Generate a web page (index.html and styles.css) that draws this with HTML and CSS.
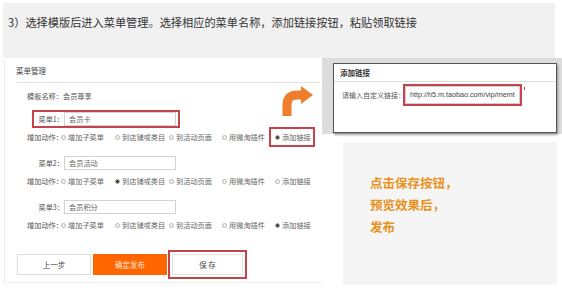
FILE: index.html
```html
<!DOCTYPE html>
<html lang="zh-CN">
<head>
<meta charset="utf-8">
<title>菜单管理</title>
<link rel="stylesheet" href="styles.css">
</head>
<body>
<div class="band">
  <p class="step">3）选择模版后进入菜单管理。选择相应的菜单名称，添加链接按钮，粘贴领取链接</p>
</div>
<div class="main">
  <section class="panel">
    <div class="panel-title">菜单管理</div>
    <div class="tpl">模板名称：会员尊享</div>

    <div class="block">
      <div class="menu-row hl"><span class="mlabel">菜单1：</span><span class="input">会员卡</span></div>
      <div class="actions">
        <span class="alabel">增加动作：</span>
        <span class="radio"><i class="dot"></i>增加子菜单</span>
        <span class="radio"><i class="dot"></i>到店铺或类目</span>
        <span class="radio"><i class="dot"></i>到活动页面</span>
        <span class="radio"><i class="dot"></i>用微淘插件</span>
        <span class="radio last hl"><i class="dot on"></i>添加链接</span>
      </div>
    </div>

    <div class="block">
      <div class="menu-row"><span class="mlabel">菜单2：</span><span class="input">会员活动</span></div>
      <div class="actions">
        <span class="alabel">增加动作：</span>
        <span class="radio"><i class="dot"></i>增加子菜单</span>
        <span class="radio"><i class="dot on"></i>到店铺或类目</span>
        <span class="radio"><i class="dot"></i>到活动页面</span>
        <span class="radio"><i class="dot"></i>用微淘插件</span>
        <span class="radio last"><i class="dot"></i>添加链接</span>
      </div>
    </div>

    <div class="block">
      <div class="menu-row"><span class="mlabel">菜单3：</span><span class="input">会员积分</span></div>
      <div class="actions">
        <span class="alabel">增加动作：</span>
        <span class="radio"><i class="dot"></i>增加子菜单</span>
        <span class="radio"><i class="dot"></i>到店铺或类目</span>
        <span class="radio"><i class="dot"></i>到活动页面</span>
        <span class="radio"><i class="dot"></i>用微淘插件</span>
        <span class="radio last"><i class="dot on"></i>添加链接</span>
      </div>
    </div>

    <div class="buttons">
      <span class="btn">上一步</span>
      <span class="btn primary">确定发布</span>
      <span class="btn save">保 存</span>
    </div>
  </section>

  <aside class="right">
    <div class="shot">
      <div class="dialog">
        <div class="dlg-title">添加链接</div>
        <div class="dlg-row">
          <span class="dlg-label">请输入自定义链接：</span>
          <span class="url">http://h5.m.taobao.com/vip/memt</span>
          <span class="tick"></span>
        </div>
      </div>
    </div>
    <div class="note">
      <p>点击保存按钮，</p>
      <p>预览效果后，</p>
      <p>发布</p>
    </div>
  </aside>
</div>

<svg class="arrow" width="31" height="30" viewBox="0 0 31 30" aria-hidden="true">
  <path d="M5 30 V19 Q5 9 15 9 H21" fill="none" stroke="#ee7d2c" stroke-width="9"/>
  <polygon points="19,0 31,9 19,18" fill="#ee7d2c"/>
</svg>
</body>
</html>
```
FILE: styles.css
```css
* { box-sizing: border-box; }

html, body {
  margin: 0;
  padding: 0;
}

body {
  width: 562px;
  height: 290px;
  overflow: hidden;
  position: relative;
  background: #fff;
  font-family: "Noto Sans CJK SC", "Noto Sans", sans-serif;
  color: #555;
}

.band {
  margin: 3px 7px 0 3px;
  height: 55px;
  background: #f1f1f1;
  padding: 11px 0 0 5px;
}

.step {
  margin: 0;
  font-size: 11.2px;
  line-height: 16px;
  color: #333;
  white-space: nowrap;
}

.main {
  display: flex;
  align-items: flex-start;
}

/* left panel */
.panel {
  margin: 2px 0 0 4px;
  width: 318px;
  height: 223px;
  border-left: 1px solid #ececec;
  border-bottom: 1px solid #f0f0f0;
  display: flex;
  flex-direction: column;
  font-size: 7.2px;
}

.panel-title {
  margin: 0 2px 0 11px;
  padding: 6px 0;
  line-height: 10px;
  border-bottom: 1px solid #e2e2e2;
  color: #444;
  font-size: 7.5px;
}

.tpl {
  margin-top: 8px;
  padding-left: 22px;
  line-height: 10px;
  color: #555;
}

.block {
  margin-top: 7px;
  display: flex;
  flex-direction: column;
}
.tpl + .block { margin-top: 9px; }

.menu-row {
  margin-left: 27px;
  width: 148px;
  height: 18px;
  border: 2px solid transparent;
  display: flex;
  align-items: center;
}
.menu-row.hl { border-color: #c7434b; }

.mlabel {
  width: 30px;
  text-align: right;
  white-space: nowrap;
  color: #555;
}

.input {
  width: 112px;
  height: 14px;
  border: 1px solid #d3d3d3;
  padding-left: 4px;
  line-height: 12px;
  color: #666;
  white-space: nowrap;
}

.actions {
  margin-top: -1px;
  height: 20px;
  padding-left: 22px;
  display: grid;
  grid-template-columns: 34px 54px 54px 53px 47px 48px;
  align-items: center;
  white-space: nowrap;
}

.alabel { color: #555; }

.radio {
  display: flex;
  align-items: center;
  color: #666;
}

.radio.last {
  height: 20px;
  width: 46px;
  border: 2px solid transparent;
  padding-left: 4px;
}
.radio.hl { border-color: #c7434b; }

.dot {
  display: inline-block;
  width: 5px;
  height: 5px;
  border-radius: 50%;
  border: 1px solid #b5b5b5;
  background: #f3f3f3;
  margin-right: 2px;
  flex: none;
}
.dot.on {
  background: radial-gradient(circle, #333 0 1.3px, #f3f3f3 1.6px);
  border-color: #999;
}

.buttons {
  margin-top: 15px;
  padding-left: 12px;
  display: flex;
  align-items: center;
  gap: 2px;
}

.btn {
  width: 74px;
  height: 21px;
  border: 1px solid #dedede;
  display: flex;
  align-items: center;
  justify-content: center;
  font-size: 7.5px;
  color: #444;
  background: #fff;
}
.btn.primary {
  background: #ff6600;
  border-color: #ff6600;
  color: #ffe9d9;
}
.btn.save {
  margin-left: -1px;
  width: 79px;
  height: 29px;
  border: 2px solid #c7434b;
  box-shadow: inset 0 0 0 2px #fff, inset 0 0 0 3px #e4e4e4;
}

/* right side */
.right {
  width: 240px;
  display: flex;
  flex-direction: column;
}

.shot {
  height: 76px;
  background: #dcdcdc;
  padding: 5px 0 0 11px;
}

.dialog {
  width: 224px;
  height: 70px;
  background: #fff;
  border: 1px solid #555;
  box-shadow: 1px 2px 2px rgba(0, 0, 0, 0.35);
}

.dlg-title {
  height: 18px;
  line-height: 18px;
  padding-left: 6px;
  border-bottom: 1px solid #dedede;
  font-size: 7.5px;
  font-weight: bold;
  color: #333;
}

.dlg-row {
  display: flex;
  align-items: center;
  padding: 1px 0 0 8px;
  height: 24px;
}

.dlg-label {
  width: 60px;
  font-size: 7px;
  white-space: nowrap;
  color: #555;
}

.url {
  margin-left: 1px;
  width: 119px;
  height: 22px;
  border: 2px solid #c7434b;
  box-shadow: inset 0 0 0 1px #d0d0d0;
  padding-left: 5px;
  font-family: "Liberation Sans", Arial, sans-serif;
  font-size: 7.2px;
  line-height: 18px;
  color: #444;
  white-space: nowrap;
}

.tick {
  width: 1px;
  height: 3px;
  margin: 0 0 12px 2px;
  background: #c7434b;
}

.note {
  margin: 8px 0 0 21px;
  width: 214px;
  height: 143px;
  background: #f5f5f5;
  padding: 30px 0 0 27px;
}

.note p {
  margin: 0;
  font-size: 12.5px;
  line-height: 22px;
  font-weight: bold;
  color: #e8921c;
  white-space: nowrap;
}

.arrow {
  position: absolute;
  left: 282px;
  top: 86px;
}
```
